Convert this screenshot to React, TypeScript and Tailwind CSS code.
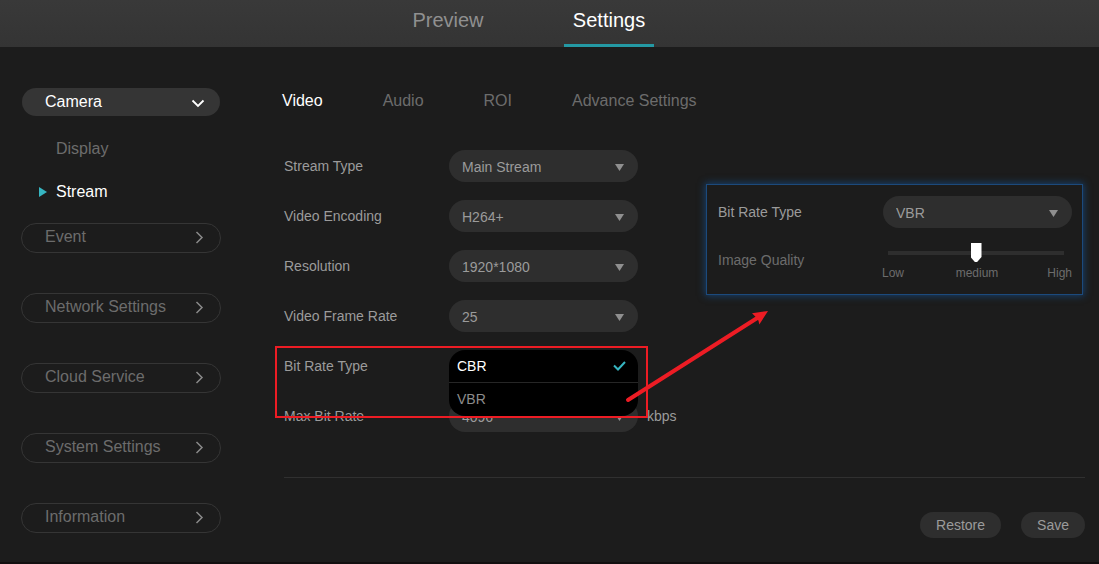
import { useState } from "react";
import type { ReactNode } from "react";

const sections = ["Event", "Network Settings", "Cloud Service", "System Settings", "Information"];
const tabs = ["Video", "Audio", "ROI", "Advance Settings"];

function Chevron({ down = false }: { down?: boolean }) {
  return (
    <svg
      width="14"
      height="14"
      viewBox="0 0 14 14"
      fill="none"
      stroke="currentColor"
      strokeWidth={down ? 1.8 : 1.5}
      aria-hidden="true"
    >
      <path d={down ? "M1.500 5.500l5.500 5.500 5.500-5.500" : "M4.500 2l5.500 5.500-5.500 5.500"} />
    </svg>
  );
}

function Dropdown({ id, options }: { id: string; options: string[] }) {
  return (
    <div className="relative h-8 w-[189px]">
      <select
        id={id}
        className="h-8 w-full appearance-none rounded-full bg-[#2e2e2e] pt-0.5 pl-[13px] text-sm text-[#9b9b9b] outline-none"
      >
        {options.map((o) => (
          <option key={o}>{o}</option>
        ))}
      </select>
      <svg
        className="pointer-events-none absolute top-3.5 right-3.5"
        width="9"
        height="7"
        viewBox="0 0 9 7"
        aria-hidden="true"
      >
        <path d="M0 0h9L4.500 7z" fill="#8f8f8f" />
      </svg>
    </div>
  );
}

function Row({ id, label, children }: { id: string; label: string; children: ReactNode }) {
  return (
    <div className="relative flex h-8 items-center">
      <label htmlFor={id} className="w-[165px] shrink-0 text-sm text-[#9b9b9b]">
        {label}
      </label>
      {children}
    </div>
  );
}

export default function App() {
  const [bitRate, setBitRate] = useState("CBR");
  const [quality, setQuality] = useState(50);

  return (
    <div className="flex min-h-screen flex-col border-b-2 border-[#120f10] bg-[#1c1c1c] font-['Liberation_Sans',Arial,sans-serif]">
      <header className="flex h-[47px] justify-center gap-[71px] bg-linear-to-b from-[#393939] to-[#343434] pr-[42px] text-xl">
        <a href="#preview" className="w-[90px] pt-1.5 text-center text-[#909090]">
          Preview
        </a>
        <a href="#settings" className="w-[90px] border-b-3 border-[#2499a4] pt-1.5 text-center text-white">
          Settings
        </a>
      </header>

      <div className="flex flex-1">
        <aside className="w-[221px] shrink-0 pt-10 pl-[21px] text-base">
          <button
            type="button"
            className="flex h-[30px] w-full items-center justify-between rounded-full border border-transparent bg-[#353535] bg-clip-padding pr-[15px] pl-[23px] text-white"
          >
            Camera
            <Chevron down />
          </button>
          <nav className="mt-2.5 mb-2.5 flex flex-col">
            <a href="#display" className="flex h-[43px] items-center pl-[35px] text-[#6c6c6c]">
              Display
            </a>
            <a href="#stream" className="flex h-[43px] items-center gap-[9px] pl-[18px] text-white">
              <svg width="8" height="10" viewBox="0 0 8 10" aria-hidden="true">
                <path d="M0 0l8 5-8 5z" fill="#36b5c1" />
              </svg>
              Stream
            </a>
          </nav>
          <div className="flex flex-col gap-10">
            {sections.map((s) => (
              <button
                key={s}
                type="button"
                className="flex h-[30px] w-full items-center justify-between rounded-full border border-[#353535] pr-3.5 pb-0.5 pl-[23px] text-[#6c6c6c]"
              >
                {s}
                <span className="text-[#8a8a8a]">
                  <Chevron />
                </span>
              </button>
            ))}
          </div>
        </aside>

        <main className="flex-1 pt-10 pr-3.5 pl-[61px]">
          <nav className="flex h-7 items-center gap-[60px] text-base">
            {tabs.map((t, i) => (
              <a key={t} href={"#" + t} className={i === 0 ? "text-white" : "text-[#6c6c6c]"}>
                {t}
              </a>
            ))}
          </nav>

          <form className="mt-[35px] ml-0.5" onSubmit={(e) => e.preventDefault()}>
            <div className="flex items-start">
              <div className="flex w-[422px] shrink-0 flex-col gap-[18px]">
                <Row id="stream-type" label="Stream Type">
                  <Dropdown id="stream-type" options={["Main Stream"]} />
                </Row>
                <Row id="encoding" label="Video Encoding">
                  <Dropdown id="encoding" options={["H264+"]} />
                </Row>
                <Row id="resolution" label="Resolution">
                  <Dropdown id="resolution" options={["1920*1080"]} />
                </Row>
                <Row id="frame-rate" label="Video Frame Rate">
                  <Dropdown id="frame-rate" options={["25"]} />
                </Row>
                <Row id="bit-rate-type" label="Bit Rate Type">
                  <div className="relative h-8 w-[189px]">
                    <div
                      role="listbox"
                      aria-label="Bit Rate Type"
                      className="absolute inset-x-0 top-0 z-10 divide-y divide-[#262626] overflow-hidden rounded-2xl bg-black"
                    >
                      {["CBR", "VBR"].map((o) => (
                        <button
                          key={o}
                          id={o === bitRate ? "bit-rate-type" : undefined}
                          type="button"
                          role="option"
                          aria-selected={o === bitRate}
                          onClick={() => setBitRate(o)}
                          className="flex h-[33px] w-full items-center justify-between pr-3 pb-px pl-2 text-sm text-[#8c8c8c] aria-selected:text-white"
                        >
                          {o}
                          {o === bitRate && (
                            <svg width="13" height="10" viewBox="0 0 13 10" fill="none" aria-hidden="true">
                              <path d="M1 4.500l4 4L12 1" stroke="#36b5c1" strokeWidth="2" />
                            </svg>
                          )}
                        </button>
                      ))}
                    </div>
                  </div>
                  <div className="pointer-events-none absolute -top-1 -left-[9px] z-20 h-[72px] w-[373px] border-2 border-[#ed1c24]" />
                  <svg
                    className="pointer-events-none absolute -top-[45px] left-[340px] z-20"
                    width="150"
                    height="105"
                    viewBox="0 0 150 105"
                    aria-hidden="true"
                  >
                    <path d="M4 95L134 12.500" stroke="#ed1c24" strokeWidth="4" strokeLinecap="round" />
                    <path d="M144 6L128 8.200l4.300 4.200 2.200 3.400L135.300 19.500z" fill="#ed1c24" />
                  </svg>
                </Row>
                <Row id="max-bit-rate" label="Max Bit Rate">
                  <Dropdown id="max-bit-rate" options={["4096"]} />
                  <span className="ml-[9px] text-sm text-[#9b9b9b]">kbps</span>
                </Row>
              </div>

              <section className="mt-[34px] h-[111px] w-[377px] shrink-0 border border-[#1c4a7c] pt-[11px] pl-[11px] shadow-[0_0_7px_1px_#17406d]">
                <Row id="vbr-type" label="Bit Rate Type">
                  <Dropdown id="vbr-type" options={["VBR", "CBR"]} />
                </Row>
                <div className="mt-[15px] flex">
                  <label htmlFor="quality" className="w-[164px] pt-[7px] text-sm text-[#6c6c6c]">
                    Image Quality
                  </label>
                  <div className="w-[190px]">
                    <input
                      id="quality"
                      type="range"
                      value={quality}
                      onChange={(e) => setQuality(Number(e.target.value))}
                      className="mx-1.5 block h-5 w-[176px] appearance-none bg-transparent [&::-webkit-slider-runnable-track]:h-1 [&::-webkit-slider-runnable-track]:bg-[#2e2e2e] [&::-webkit-slider-thumb]:-mt-2 [&::-webkit-slider-thumb]:h-[19px] [&::-webkit-slider-thumb]:w-[11px] [&::-webkit-slider-thumb]:appearance-none [&::-webkit-slider-thumb]:bg-white [&::-webkit-slider-thumb]:[clip-path:polygon(0_0,100%_0,100%_74%,60%_100%,40%_100%,0_74%)]"
                    />
                    <div className="mt-0.5 grid grid-cols-3 text-xs text-[#6c6c6c]">
                      <span>Low</span>
                      <span className="text-center">medium</span>
                      <span className="text-right">High</span>
                    </div>
                  </div>
                </div>
              </section>
            </div>

            <div className="mt-[45px] flex justify-end gap-5 border-t border-[#303030] pt-[34px]">
              <button type="button" className="h-[26px] rounded-full bg-[#2e2e2e] px-4 text-sm text-[#9b9b9b]">
                Restore
              </button>
              <button type="submit" className="h-[26px] rounded-full bg-[#2e2e2e] px-4 text-sm text-[#9b9b9b]">
                Save
              </button>
            </div>
          </form>
        </main>
      </div>
    </div>
  );
}
